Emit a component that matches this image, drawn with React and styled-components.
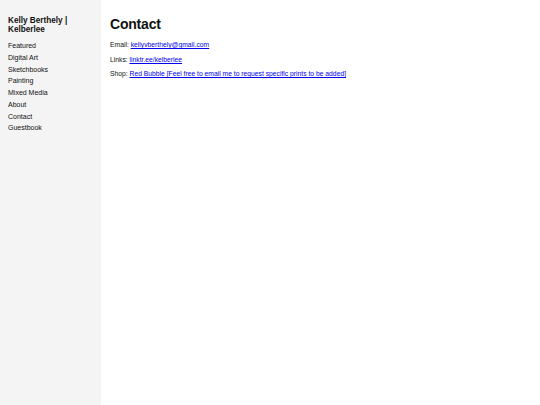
import React from 'react';
import styled, { createGlobalStyle } from 'styled-components';

const GlobalStyle = createGlobalStyle`
    html, body {
        margin: 0;
        padding: 0;
        height: 100%;
    }
    body {
        font-family: "Liberation Sans", Arial, sans-serif;
        background: #ffffff;
    }
    #root {
        height: 100%;
    }
`

const navItems = ['Featured', 'Digital Art', 'Sketchbooks', 'Painting', 'Mixed Media', 'About', 'Contact', 'Guestbook'];

const App = () => {
    return (
        <Layout>
            <GlobalStyle />
            <Sidebar>
                <SiteTitle>Kelly Berthely | Kelberlee</SiteTitle>
                <NavList>
                    {navItems.map((item) => (
                        <NavItem key={item}>{item}</NavItem>
                    ))}
                </NavList>
            </Sidebar>
            <Main>
                <Heading>Contact</Heading>
                <Line>Email: <Link href="#">kellyvberthely@gmail.com</Link></Line>
                <Line>Links: <Link href="#">linktr.ee/kelberlee</Link></Line>
                <Line>Shop: <Link href="#">Red Bubble [Feel free to email me to request specific prints to be added]</Link></Line>
            </Main>
        </Layout>
    )
}

const Layout = styled.div`
    display: flex;
    min-height: 405px;
    height: 100%;
`
const Sidebar = styled.nav`
    width: 101px;
    flex-shrink: 0;
    background: #f4f4f4;
    padding: 17px 8px 0 8px;
    box-sizing: border-box;
`
const SiteTitle = styled.div`
    font-size: 8.2px;
    font-weight: bold;
    line-height: 8.5px;
    color: #111;
    margin-bottom: 6px;
`
const NavList = styled.div`
    display: flex;
    flex-direction: column;
`
const NavItem = styled.a`
    font-size: 7px;
    line-height: 11.75px;
    color: #111;
    text-decoration: none;
`
const Main = styled.main`
    flex: 1;
    padding: 16px 9px;
`
const Heading = styled.h1`
    font-size: 14px;
    font-weight: bold;
    letter-spacing: -0.2px;
    margin: 0 0 9px 0;
    line-height: 16px;
    color: #111;
`
const Line = styled.p`
    font-size: 6.75px;
    line-height: 8px;
    margin: 0 0 6.5px 0;
    color: #111;
`
const Link = styled.a`
    color: #0000ee;
    text-decoration: underline;
`

export default App;
